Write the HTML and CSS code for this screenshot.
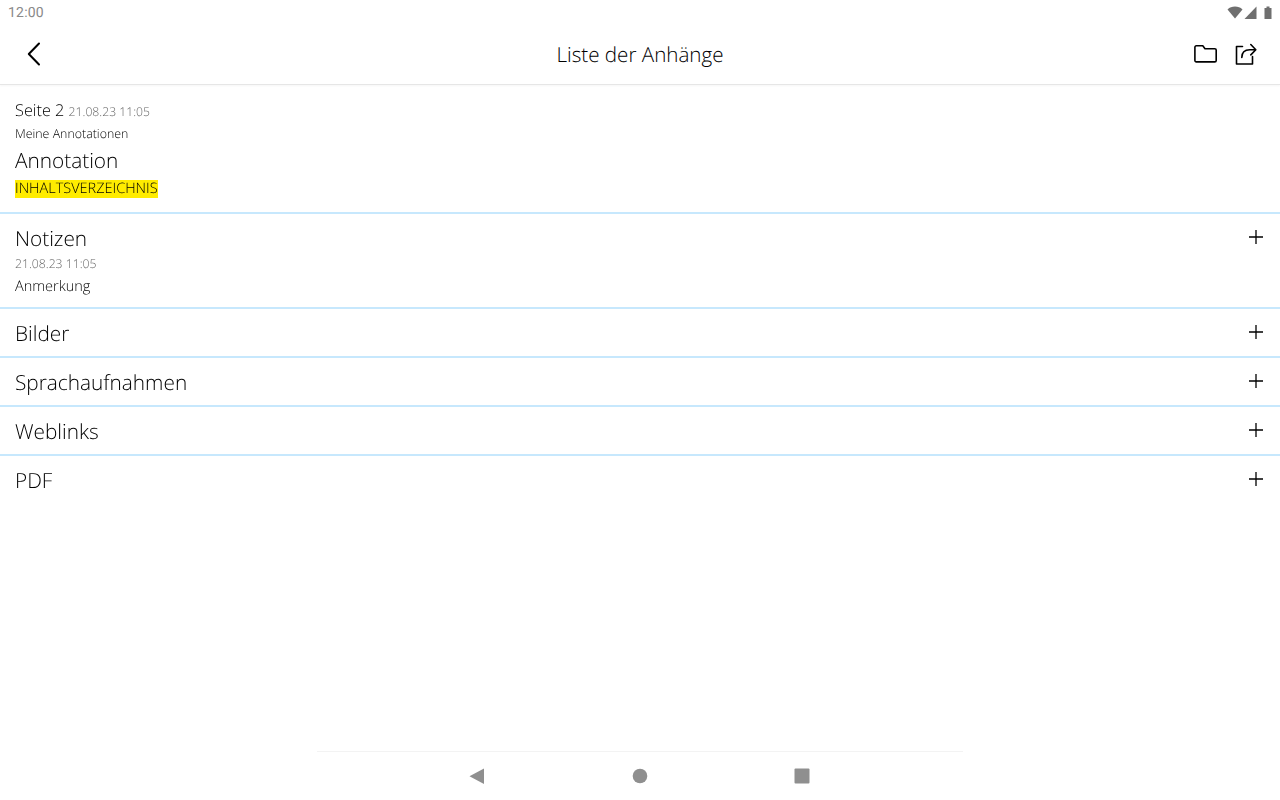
FILE: index.html
```html
<!DOCTYPE html>
<html lang="de">
<head>
<meta charset="utf-8">
<title>Liste der Anhänge</title>
<link rel="stylesheet" href="styles.css">
</head>
<body>
<div class="screen">
  <div class="status">
    <span class="clock">12:00</span>
    <div class="status-icons">
      <svg width="16" height="13" viewBox="0 0 16 13"><path class="sys" d="M0.500 3.400C2.600 1.600 5.100 0.600 8 0.600s5.400 1 7.500 2.800L8 12.500z"/></svg>
      <svg class="signal" width="13" height="13" viewBox="0 0 13 13"><path class="sys" d="M12.500 0.500V13H0.500z"/></svg>
      <svg class="battery" width="8" height="13" viewBox="0 0 8 13"><path class="sys" d="M0.500 2h2V0.500h3V2h2v11h-7z"/></svg>
    </div>
  </div>
  <header class="toolbar">
    <svg class="back" width="16" height="24" viewBox="0 0 16 24"><path class="line" stroke-width="2" d="M13 1.500 2.800 12 13 22.500"/></svg>
    <h1 class="title">Liste der Anhänge</h1>
    <div class="actions">
      <svg width="24" height="20" viewBox="0 0 24 20"><path class="line" stroke-width="1.600" d="M2.300 1.800h6.500l2.200 2.900h9.800c.8 0 1.400.6 1.400 1.400v10.400c0 .8-.6 1.400-1.400 1.400H2.300c-.8 0-1.400-.6-1.400-1.400V3.200c0-.8.600-1.400 1.400-1.400z"/></svg>
      <svg width="22" height="22" viewBox="0 0 22 22"><path class="line" stroke-width="1.600" d="M7.500 3.500H1.500V21h16v-7.500M6.800 14.500c0-5 3-7.800 8-7.800h5.500M15.800 1.500l5 5.200-5 5.200"/></svg>
    </div>
  </header>
  <main class="list">
    <section class="annotation">
      <div class="page-line"><span class="page">Seite 2</span> <span class="date">21.08.23 11:05</span></div>
      <div class="small">Meine Annotationen</div>
      <div class="heading">Annotation</div>
      <div class="mark-row"><mark class="mark">INHALTSVERZEICHNIS</mark></div>
    </section>
    <section class="row notes">
      <div class="row-head"><span class="heading">Notizen</span><svg class="plus" width="14" height="14" viewBox="0 0 14 14"><path class="line" stroke-width="1.300" d="M7 0v14M0 7h14"/></svg></div>
      <div class="date note-date">21.08.23 11:05</div>
      <div class="note">Anmerkung</div>
    </section>
    <section class="row"><div class="row-head"><span class="heading">Bilder</span><svg class="plus" width="14" height="14" viewBox="0 0 14 14"><path class="line" stroke-width="1.300" d="M7 0v14M0 7h14"/></svg></div></section>
    <section class="row"><div class="row-head"><span class="heading">Sprachaufnahmen</span><svg class="plus" width="14" height="14" viewBox="0 0 14 14"><path class="line" stroke-width="1.300" d="M7 0v14M0 7h14"/></svg></div></section>
    <section class="row"><div class="row-head"><span class="heading">Weblinks</span><svg class="plus" width="14" height="14" viewBox="0 0 14 14"><path class="line" stroke-width="1.300" d="M7 0v14M0 7h14"/></svg></div></section>
    <section class="row last"><div class="row-head"><span class="heading">PDF</span><svg class="plus" width="14" height="14" viewBox="0 0 14 14"><path class="line" stroke-width="1.300" d="M7 0v14M0 7h14"/></svg></div></section>
  </main>
  <nav class="navbar">
    <svg class="nav-back" width="16" height="16" viewBox="0 0 16 16"><path class="sys-nav" d="M15 0.500V16L0.500 8.200z"/></svg>
    <svg width="16" height="16" viewBox="0 0 16 16"><circle class="sys-nav" cx="8" cy="8" r="7.300"/></svg>
    <svg width="16" height="16" viewBox="0 0 16 16"><rect class="sys-nav" x="0.500" y="0.500" width="15" height="15" rx="1"/></svg>
  </nav>
</div>
</body>
</html>
```
FILE: styles.css
```css
* { box-sizing: border-box; }
html, body { margin: 0; padding: 0; }
body { background: #fff; font-family: "Open Sans", "Noto Sans", sans-serif; color: #111; text-rendering: geometricPrecision; }
.screen { width: 1280px; height: 800px; display: flex; flex-direction: column; overflow: hidden; }
.status { height: 24px; flex: none; display: flex; align-items: center; justify-content: space-between; padding: 0 8px 0 8px; }
.clock { font-family: Roboto, sans-serif; font-size: 14px; color: #8a8a8a; letter-spacing: .2px; margin-top: 1px; }
.status-icons { display: flex; align-items: center; gap: 1px; }
.battery { margin-left: 6px; }
.sys { fill: #6f6f6f; }
.toolbar { height: 61px; flex: none; display: flex; align-items: center; justify-content: space-between; padding: 0 23px 0 26px; border-bottom: 1px solid #e6e6e6; position: relative; box-shadow: 0 1px 2px rgba(0,0,0,.04); }
.title { position: absolute; left: 0; right: 0; margin: 0; text-align: center; font-size: 20.600px; font-weight: 300; color: #000; top: 18px; line-height: 26px; }
.line { fill: none; stroke: #000; stroke-linecap: round; stroke-linejoin: round; }
.back { margin-top: -1px; }
.actions { display: flex; align-items: center; gap: 17px; }
.list { flex: 1; display: flex; flex-direction: column; will-change: opacity; }
.annotation { height: 129px; padding: 13px 15px 0; border-bottom: 2px solid #c7e8fd; }
.page-line { line-height: 24px; height: 24px; }
.page { font-size: 16.300px; font-weight: 300; color: #000; }
.date { font-size: 12.200px; font-weight: 300; color: #666; }
.small { font-size: 12.400px; line-height: 16px; margin-top: 4px; font-weight: 300; color: #000; }
.heading { font-size: 20.800px; line-height: 26px; font-weight: 300; color: #000; }
.annotation .heading { display: block; margin-top: 6px; }
.mark-row { line-height: 18px; height: 18px; margin-top: 4px; }
.mark { background: #ffec00; color: #000; font-size: 14.500px; font-weight: 300; display: inline-block; line-height: 18px; }
.row { height: 49px; padding: 12px 10px 0 15px; border-bottom: 2px solid #c7e8fd; flex: none; }
.row.notes { height: 95px; }
.row.last { border-bottom: 0; }
.row-head { display: flex; align-items: center; justify-content: space-between; height: 26px; }
.plus { margin-right: 7px; margin-top: -4px; }
.note-date { line-height: 16px; margin-top: 4px; }
.note { font-size: 14.500px; line-height: 20px; margin-top: 5px; font-weight: 300; color: #000; }
.navbar { height: 49px; flex: none; width: 646px; margin: 0 auto; border-top: 1px solid #f3f3f3; display: flex; align-items: center; justify-content: center; gap: 146px; }
.nav-back { margin-left: -2px; margin-right: 1px; }
.sys-nav { fill: #8f8f8f; }
```
